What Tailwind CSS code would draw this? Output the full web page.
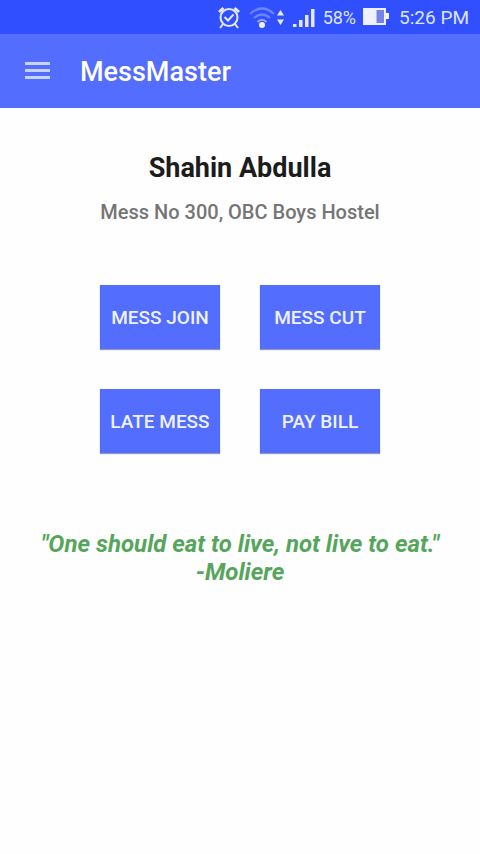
<!DOCTYPE html>
<html lang="en">
<head>
<meta charset="utf-8">
<meta name="viewport" content="width=device-width, initial-scale=1">
<title>MessMaster</title>
<script src="https://cdn.jsdelivr.net/npm/@tailwindcss/browser@4"></script>
</head>
<body class="min-h-screen bg-[#fefefe] font-[Roboto,sans-serif]">
<div class="flex h-[34px] items-center justify-end bg-[#304ffe] pt-px pr-[11px] text-lg text-[#dfe5ff]">
  <svg class="mr-2 h-6 w-6" viewBox="0 0 24 24" fill="none" stroke="#e4e9ff" stroke-width="2" aria-label="Alarm"><circle cx="12" cy="11.500" r="8.500"/><path d="M2 6 6.500 2M22 6 17.500 2" stroke-width="3"/><path d="M6 18l-3 4M18 18l3 4M7.500 11l3.500 3.500 5.500-6"/></svg>
  <svg class="mr-2 h-6 w-[36px]" viewBox="0 0 36 24" fill="none" aria-label="Wi-Fi"><g stroke="#6f84ff" stroke-width="2.200"><path d="M1 8Q13-3 25 8M5 12Q13 5 21 12"/></g><path d="M8.500 16Q13 11.500 17.500 16" stroke="#93a3ff" stroke-width="2.200"/><circle cx="13" cy="19" r="3" fill="#eef1ff"/><path d="M28 9.500 31.500 4l3.500 5.500zM28 13.500h7L31.500 19z" fill="#e4e9ff"/></svg>
  <svg class="mr-2 h-6 w-[22px]" viewBox="0 0 22 24" fill="#e4e9ff" aria-label="Signal"><path d="M0 18h3.500v3H0zM6 14h3.500v7H6zM12 9h3.500v12H12zM18 3h3.500v18H18z"/></svg>
  <span>58%</span>
  <svg class="mr-2.5 ml-[7px] h-6 w-[26px]" viewBox="0 0 26 24" aria-label="Battery"><path d="M0 2h23v5h3v6h-3v6H0z" fill="#eef1ff"/><path d="M13.500 4H21v13h-7.500z" fill="#7384e6"/></svg>
  <span class="text-[19px]">5:26 PM</span>
</div>
<header class="flex h-[74px] items-center bg-[#536dfe] px-6 pt-0.5 text-white">
  <button type="button" aria-label="Open menu" class="mr-[30px]">
    <svg class="h-[26px] w-[26px]" viewBox="0 0 26 26" fill="#c8d3ff"><path d="M1 3h25v3H1zM1 10h25v3H1zM1 17h25v3H1z"/></svg>
  </button>
  <h1 class="text-[27px] leading-8 font-medium">MessMaster</h1>
</header>
<main class="flex flex-col items-center pt-11 text-center">
  <h2 class="text-[27px] leading-8 font-bold text-[#1c1c1c]">Shahin Abdulla</h2>
  <p class="mt-4 text-xl leading-6 font-medium text-[#757575]">Mess No 300, OBC Boys Hostel</p>
  <div class="mt-[61px] grid grid-cols-2 gap-10 text-[19px] font-medium text-[#eef2ff]">
    <button type="button" class="h-16 w-[120px] bg-[#536dfe] pt-0.5 whitespace-nowrap shadow-[0_1px_1px_#8f9ac8]">MESS JOIN</button>
    <button type="button" class="h-16 w-[120px] bg-[#536dfe] pt-0.5 whitespace-nowrap shadow-[0_1px_1px_#8f9ac8]">MESS CUT</button>
    <button type="button" class="h-16 w-[120px] bg-[#536dfe] pt-0.5 whitespace-nowrap shadow-[0_1px_1px_#8f9ac8]">LATE MESS</button>
    <button type="button" class="h-16 w-[120px] bg-[#536dfe] pt-0.5 whitespace-nowrap shadow-[0_1px_1px_#8f9ac8]">PAY BILL</button>
  </div>
  <p class="mt-[77px] text-2xl leading-7 font-bold text-[#55a65c] italic">"One should eat to live, not live to eat."<br>-Moliere</p>
</main>
</body>
</html>
